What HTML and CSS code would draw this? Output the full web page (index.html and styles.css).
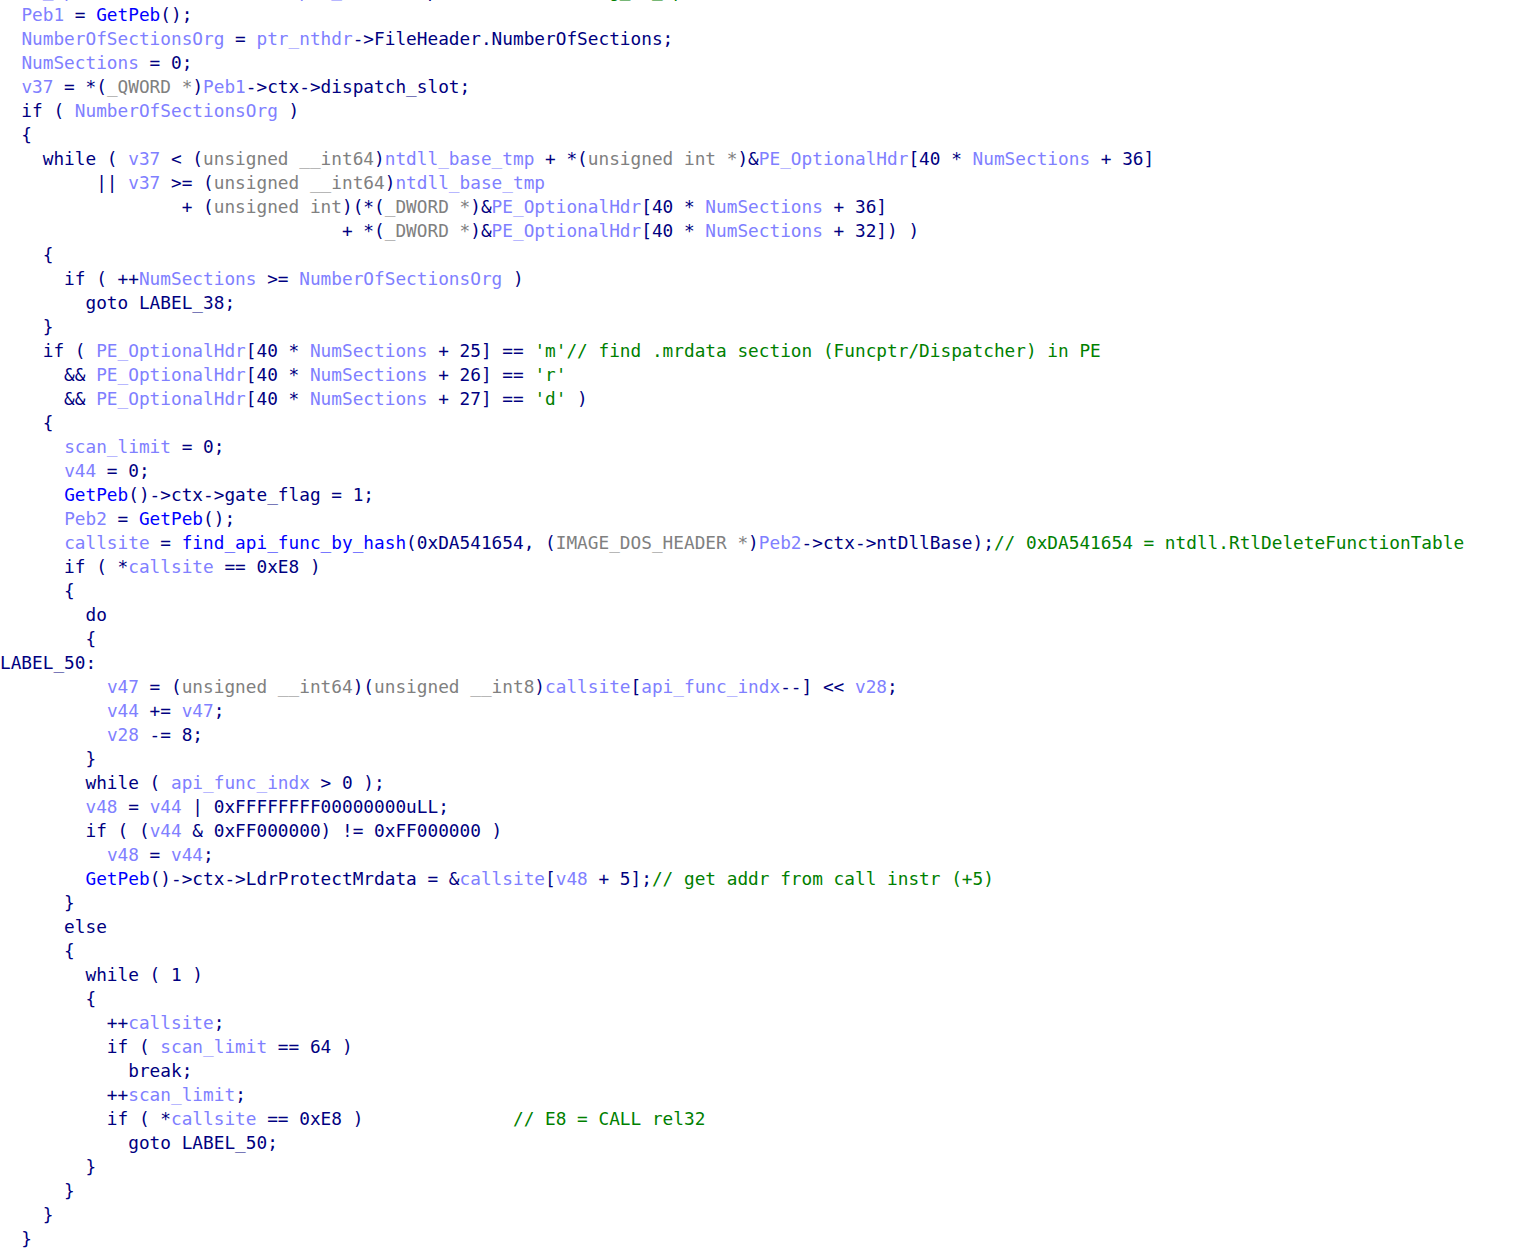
FILE: index.html
```html
<!DOCTYPE html>
<html>
<head>
<meta charset="utf-8">
<link rel="stylesheet" href="styles.css">
</head>
<body>
<div class="code">
<div class="ln">  <span class="v">PE_OptionalHdr</span> = (<span class="t">char *</span>)&amp;<span class="v">ptr_nthdr</span>-&gt;OptionalHeader;<span class="c">// g_nt_opt</span></div>
<div class="ln">  <span class="v">Peb1</span> = <span class="f">GetPeb</span>();</div>
<div class="ln">  <span class="v">NumberOfSectionsOrg</span> = <span class="v">ptr_nthdr</span>-&gt;FileHeader.NumberOfSections;</div>
<div class="ln">  <span class="v">NumSections</span> = 0;</div>
<div class="ln">  <span class="v">v37</span> = *(<span class="t">_QWORD *</span>)<span class="v">Peb1</span>-&gt;ctx-&gt;dispatch_slot;</div>
<div class="ln">  if ( <span class="v">NumberOfSectionsOrg</span> )</div>
<div class="ln">  {</div>
<div class="ln">    while ( <span class="v">v37</span> &lt; (<span class="t">unsigned __int64</span>)<span class="v">ntdll_base_tmp</span> + *(<span class="t">unsigned int *</span>)&amp;<span class="v">PE_OptionalHdr</span>[40 * <span class="v">NumSections</span> + 36]</div>
<div class="ln">         || <span class="v">v37</span> &gt;= (<span class="t">unsigned __int64</span>)<span class="v">ntdll_base_tmp</span></div>
<div class="ln">                 + (<span class="t">unsigned int</span>)(*(<span class="t">_DWORD *</span>)&amp;<span class="v">PE_OptionalHdr</span>[40 * <span class="v">NumSections</span> + 36]</div>
<div class="ln">                                + *(<span class="t">_DWORD *</span>)&amp;<span class="v">PE_OptionalHdr</span>[40 * <span class="v">NumSections</span> + 32]) )</div>
<div class="ln">    {</div>
<div class="ln">      if ( ++<span class="v">NumSections</span> &gt;= <span class="v">NumberOfSectionsOrg</span> )</div>
<div class="ln">        goto LABEL_38;</div>
<div class="ln">    }</div>
<div class="ln">    if ( <span class="v">PE_OptionalHdr</span>[40 * <span class="v">NumSections</span> + 25] == <span class="c">'m'// find .mrdata section (Funcptr/Dispatcher) in PE</span></div>
<div class="ln">      &amp;&amp; <span class="v">PE_OptionalHdr</span>[40 * <span class="v">NumSections</span> + 26] == <span class="c">'r'</span></div>
<div class="ln">      &amp;&amp; <span class="v">PE_OptionalHdr</span>[40 * <span class="v">NumSections</span> + 27] == <span class="c">'d'</span> )</div>
<div class="ln">    {</div>
<div class="ln">      <span class="v">scan_limit</span> = 0;</div>
<div class="ln">      <span class="v">v44</span> = 0;</div>
<div class="ln">      <span class="f">GetPeb</span>()-&gt;ctx-&gt;gate_flag = 1;</div>
<div class="ln">      <span class="v">Peb2</span> = <span class="f">GetPeb</span>();</div>
<div class="ln">      <span class="v">callsite</span> = <span class="f">find_api_func_by_hash</span>(0xDA541654, (<span class="t">IMAGE_DOS_HEADER *</span>)<span class="v">Peb2</span>-&gt;ctx-&gt;ntDllBase);<span class="c">// 0xDA541654 = ntdll.RtlDeleteFunctionTable</span></div>
<div class="ln">      if ( *<span class="v">callsite</span> == 0xE8 )</div>
<div class="ln">      {</div>
<div class="ln">        do</div>
<div class="ln">        {</div>
<div class="ln">LABEL_50:</div>
<div class="ln">          <span class="v">v47</span> = (<span class="t">unsigned __int64</span>)(<span class="t">unsigned __int8</span>)<span class="v">callsite</span>[<span class="v">api_func_indx</span>--] &lt;&lt; <span class="v">v28</span>;</div>
<div class="ln">          <span class="v">v44</span> += <span class="v">v47</span>;</div>
<div class="ln">          <span class="v">v28</span> -= 8;</div>
<div class="ln">        }</div>
<div class="ln">        while ( <span class="v">api_func_indx</span> &gt; 0 );</div>
<div class="ln">        <span class="v">v48</span> = <span class="v">v44</span> | 0xFFFFFFFF00000000uLL;</div>
<div class="ln">        if ( (<span class="v">v44</span> &amp; 0xFF000000) != 0xFF000000 )</div>
<div class="ln">          <span class="v">v48</span> = <span class="v">v44</span>;</div>
<div class="ln">        <span class="f">GetPeb</span>()-&gt;ctx-&gt;LdrProtectMrdata = &amp;<span class="v">callsite</span>[<span class="v">v48</span> + 5];<span class="c">// get addr from call instr (+5)</span></div>
<div class="ln">      }</div>
<div class="ln">      else</div>
<div class="ln">      {</div>
<div class="ln">        while ( 1 )</div>
<div class="ln">        {</div>
<div class="ln">          ++<span class="v">callsite</span>;</div>
<div class="ln">          if ( <span class="v">scan_limit</span> == 64 )</div>
<div class="ln">            break;</div>
<div class="ln">          ++<span class="v">scan_limit</span>;</div>
<div class="ln">          if ( *<span class="v">callsite</span> == 0xE8 )              <span class="c">// E8 = CALL rel32</span></div>
<div class="ln">            goto LABEL_50;</div>
<div class="ln">        }</div>
<div class="ln">      }</div>
<div class="ln">    }</div>
<div class="ln">  }</div>
</div>
</body>
</html>
```
FILE: styles.css
```css
html, body {
  margin: 0;
  padding: 0;
  background: #ffffff;
}
body {
  overflow: hidden;
}
.code {
  margin-top: -21px;
  font-family: "DejaVu Sans Mono", "Liberation Mono", monospace;
  font-size: 17.75px;
  line-height: 24px;
  color: #000080;
}
.ln {
  height: 24px;
  white-space: pre;
}
.v { color: #8080ff; }
.f { color: #0000ff; }
.t { color: #808080; }
.c { color: #008000; }
```
